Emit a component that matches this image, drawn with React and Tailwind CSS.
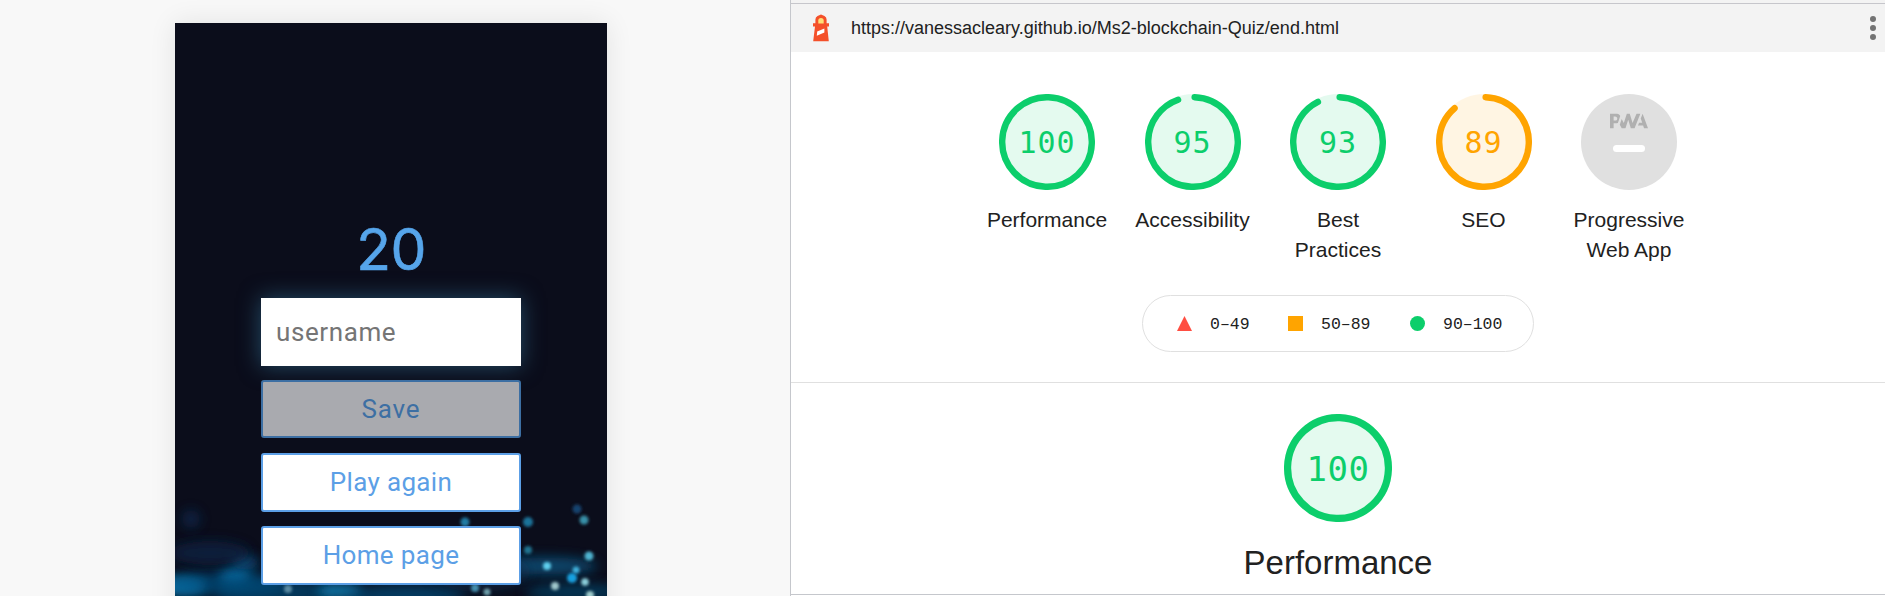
import { SiPwa } from "react-icons/si";

const GREEN = "#0cce6b";
const ORANGE = "#ffa400";

function Gauge({ score, color, textClass, sizeClass }) {
  const full = score === 100;
  const len = 2 * Math.PI * 56;
  const arc = full ? len : (score / 100) * len - 4;
  return (
    <div className={"grid place-items-center " + sizeClass}>
      <svg viewBox="0 0 120 120" className="col-start-1 row-start-1 size-full">
        <circle cx="60" cy="60" r="60" fill={color} fillOpacity="0.11" />
        <circle
          cx="60"
          cy="60"
          r="56"
          fill="none"
          stroke={color}
          strokeWidth="8"
          strokeLinecap={full ? "butt" : "round"}
          strokeDasharray={full ? undefined : `${arc} ${len}`}
          transform="rotate(-87.9 60 60)"
        />
      </svg>
      <span
        className={"col-start-1 row-start-1 pt-0.5 font-['DejaVu_Sans_Mono',monospace] leading-none " + textClass}
        style={{ color }}
      >
        {score}
      </span>
    </div>
  );
}

function Lighthouse() {
  return (
    <svg viewBox="0 0 18 28" className="h-7 w-[18px]">
      <path d="M9 0.5 L12.5 2 Q14.6 3.4 14.6 5.5 V9.2 H17 V12.4 H15.2 L16.8 27.2 H1.2 L3 12.4 H1 V9.2 H3.4 V5.5 Q3.4 3.4 5.5 2 Z" fill="#f4502a" />
      <path d="M6.3 9.6 V6.6 A2.7 2.7 0 0 1 11.7 6.6 V9.6 Z" fill="#ffdf77" />
      <path d="M5.2 17.6 L12.4 14.4 V18.4 L4.8 21.8 Z" fill="#ffffff" />
    </svg>
  );
}

const dots = [
  [290, 522, 4.5, "#2388b4", 0.9], [353, 522, 5, "#1f7fa8", 0.9], [402, 509, 4.5, "#174a78", 0.9],
  [409, 520, 4.5, "#3d9fb8", 0.9], [353, 550, 4, "#237f9c", 0.9], [372, 566, 4, "#5fd0ee", 1],
  [414, 556, 4.5, "#4fb4d0", 1], [401, 570, 3.5, "#3fb0dc", 1], [397, 578, 5, "#18a0e0", 1],
  [410, 582, 3.8, "#8cd0dc", 1], [380, 586, 4, "#a0c8cc", 1], [300, 588, 4, "#4a9cbc", 0.9],
  [312, 592, 3.5, "#7ab0bc", 0.9], [415, 595, 4, "#a0cccc", 1], [113, 589, 4, "#6f9fb4", 0.8],
];

const clouds = [
  [16, 519, 9, 9, "#0e3260", 0.6], [8, 586, 24, 9, "#0a8fcc", 0.9], [60, 577, 16, 8, "#0a88c4", 0.9],
  [70, 563, 14, 7, "#0a5c90", 0.8], [50, 584, 60, 12, "#065080", 0.7], [100, 592, 60, 12, "#064c78", 0.7],
  [165, 591, 22, 7, "#0a88c0", 0.9], [230, 595, 60, 10, "#065080", 0.7], [370, 566, 52, 9, "#075580", 0.8],
  [400, 592, 50, 8, "#064870", 0.7], [35, 553, 40, 12, "#0a2242", 0.8], [305, 572, 50, 20, "#0a2f50", 0.5],
];

function Phone() {
  return (
    <div className="relative h-[620px] w-[432px] overflow-hidden bg-[#0b0d1b] font-[Roboto,sans-serif] text-[26px] tracking-[0.35px] text-[#5c9fe6] shadow-[0_0_26px_0_rgba(0,0,0,0.09)]">
      <svg viewBox="0 23 432 573" className="absolute top-0 left-0 h-[573px] w-[432px]">
        <defs>
          <filter id="haze" x="-200%" y="-300%" width="500%" height="700%"><feGaussianBlur stdDeviation="6" /></filter>
          <filter id="spot" x="-100%" y="-100%" width="300%" height="300%"><feGaussianBlur stdDeviation="1.8" /></filter>
        </defs>
        {clouds.map(([x, y, rx, ry, c, o], i) => (
          <ellipse key={i} cx={x} cy={y} rx={rx} ry={ry} fill={c} opacity={o} filter="url(#haze)" />
        ))}
        {dots.map(([x, y, r, c, o], i) => (
          <circle key={i} cx={x} cy={y} r={r} fill={c} opacity={o} filter="url(#spot)" />
        ))}
      </svg>
      <div className="relative flex flex-col items-center">
        <div className="mt-[198px] h-[77px] font-[Inter,sans-serif] text-[57px] leading-[58px] tracking-[-0.5px] text-[#56a5eb] [-webkit-text-stroke:0.6px_#56a5eb]">20</div>
        <div className="flex h-[68px] w-[260px] items-center bg-white pl-[15px] text-[#757575] shadow-[0_0_22px_0_rgba(60,140,180,0.5)] tracking-[0.6px]">
          username
        </div>
        <div className="mt-3.5 flex h-[58px] w-[260px] items-center justify-center rounded-[3px] border-2 border-[#3d6fa3] bg-[#a9aaaf] tracking-[0.8px] text-[#3d6fa3]">
          Save
        </div>
        <div className="mt-[15px] flex h-[59px] w-[260px] items-center justify-center rounded-[3px] border-2 border-[#5c9fe6] bg-white">
          Play again
        </div>
        <div className="mt-3.5 flex h-[59px] w-[260px] items-center justify-center rounded-[3px] border-2 border-[#5c9fe6] bg-white">
          Home page
        </div>
      </div>
    </div>
  );
}

const scores = [
  { label: "Performance", score: 100, color: GREEN },
  { label: "Accessibility", score: 95, color: GREEN },
  { label: "Best Practices", score: 93, color: GREEN },
  { label: "SEO", score: 89, color: ORANGE },
];

function Column({ label, children }) {
  return (
    <div className="flex w-[145.5px] flex-col items-center">
      {children}
      <div className="mt-[15px] w-[121px] text-center text-[21px] leading-[30px]">{label}</div>
    </div>
  );
}

export default function App() {
  return (
    <div className="flex h-[596px] w-[1885px] overflow-hidden bg-[#f8f8f8] font-['Liberation_Sans',Arial,sans-serif] text-[#212121]">
      <div className="flex h-full w-[791px] shrink-0 items-start justify-center overflow-hidden border-r border-[#c5c7cc] pt-[23px] pr-2">
        <Phone />
      </div>
      <div className="flex min-w-0 flex-1 flex-col bg-white">
        <div className="h-[4px] shrink-0 border-b border-[#c6c6cb] bg-[#f3f3f3]" />
        <div className="flex h-12 shrink-0 items-center bg-[#f3f3f3] pr-[9px] pl-[21px]">
          <Lighthouse />
          <span className="ml-[21px] text-[18px]">https://vanessacleary.github.io/Ms2-blockchain-Quiz/end.html</span>
          <div className="ml-auto flex flex-col gap-[3px]">
            <i className="size-1.5 rounded-full bg-[#737373]" />
            <i className="size-1.5 rounded-full bg-[#737373]" />
            <i className="size-1.5 rounded-full bg-[#737373]" />
          </div>
        </div>
        <div className="flex h-[243px] justify-center pt-[42px]">
          {scores.map((s) => (
            <Column key={s.label} label={s.label}>
              <Gauge score={s.score} color={s.color} sizeClass="size-24" textClass="text-[30px] tracking-[0.9px]" />
            </Column>
          ))}
          <Column label="Progressive Web App">
            <div className="flex size-24 flex-col items-center rounded-full bg-[#e0e0e0]">
              <SiPwa className="mt-[7.5px] size-[38px] shrink-0 text-[#b0b0b0]" />
              <div className="mt-[5.5px] h-[7px] w-8 rounded-full bg-white" />
            </div>
          </Column>
        </div>
        <div className="flex h-[57px] w-[392px] items-center self-center rounded-full border border-[#e0e0e0] pl-[34px] font-['Liberation_Mono',monospace] text-[16.5px]">
          <svg viewBox="0 0 15 15" className="size-[15px]"><path d="M7.5 0 L15 15 H0 Z" fill="#ff4e42" /></svg>
          <span className="ml-[18px] w-[78px] pt-[3px]">0–49</span>
          <i className="size-[15px] bg-[#ffa400]" />
          <span className="ml-[18px] w-[89px] pt-[3px]">50–89</span>
          <i className="size-[15px] rounded-full bg-[#0cce6b]" />
          <span className="ml-[18px] pt-[3px]">90–100</span>
        </div>
        <div className="mt-[30px] flex h-[213px] flex-col items-center border-y border-t-[#e0e0e0] border-b-[#c5c7cc] pt-[31px]">
          <Gauge score={100} color={GREEN} sizeClass="size-[108px]" textClass="text-[34px] tracking-[0.6px]" />
          <div className="mt-[21px] text-[33px] leading-[40px]">Performance</div>
        </div>
      </div>
    </div>
  );
}
